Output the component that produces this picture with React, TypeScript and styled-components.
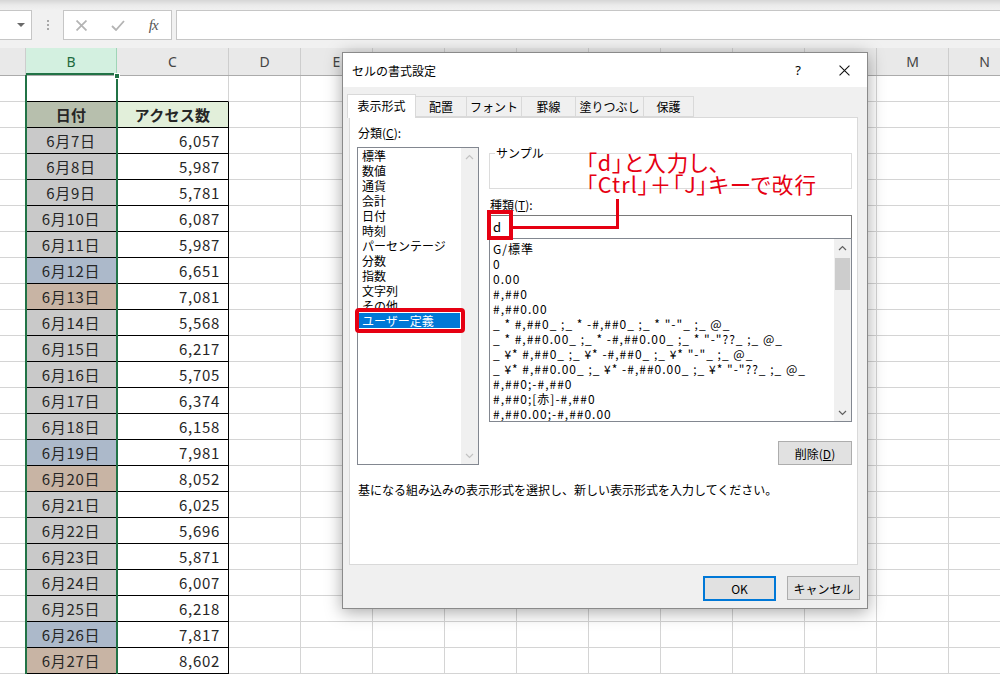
import React from 'react';
import styled, { createGlobalStyle } from 'styled-components';

const JP = `"Noto Sans CJK JP", "Noto Sans", sans-serif`;
const RED = '#e60012';
const GRID = '#d4d4d4';

const GlobalStyle = createGlobalStyle`
  html, body { margin: 0; padding: 0; background: #fff; }
  body { font-family: ${JP}; }
  * { box-sizing: border-box; }
`;

const Screen = styled.div`
  position: relative;
  width: 1000px;
  height: 674px;
  overflow: hidden;
  background: #fff;
`;

/* ---------- formula bar ---------- */
const FormulaBar = styled.div`
  height: 48px;
  display: flex;
  align-items: flex-start;
  padding-top: 10px;
  background: linear-gradient(#d6d6d6 0, #eaeaea 5px, #f1f1f1 10px);
`;
const NameBox = styled.div`
  width: 32px;
  height: 30px;
  background: #fff;
  border: 1px solid #c6c6c6;
  border-left: none;
  display: flex;
  align-items: center;
  justify-content: flex-end;
  padding-right: 6px;
`;
const DropArrow = styled.div`
  width: 0;
  height: 0;
  border-left: 4px solid transparent;
  border-right: 4px solid transparent;
  border-top: 4px solid #6a6a6a;
`;
const Grip = styled.div`
  width: 31px;
  height: 30px;
  display: flex;
  flex-direction: column;
  align-items: center;
  justify-content: center;
  gap: 2px;
`;
const GripDot = styled.div`
  width: 2px;
  height: 2px;
  background: #a8a8a8;
`;
const FxBox = styled.div`
  width: 109px;
  height: 30px;
  background: #fff;
  border: 1px solid #c6c6c6;
  display: flex;
  align-items: center;
`;
const FxSlot = styled.div`
  width: 36px;
  height: 28px;
  display: flex;
  align-items: center;
  justify-content: center;
`;
const FxText = styled.span`
  font-family: "Liberation Serif", serif;
  font-style: italic;
  font-size: 15px;
  color: #555;
  letter-spacing: -1px;
`;
const FormulaInput = styled.div`
  flex: 1;
  margin-left: 4px;
  height: 30px;
  background: #fff;
  border: 1px solid #c6c6c6;
  border-right: none;
`;

/* ---------- sheet ---------- */
const COLS = '26px 91px 112px repeat(11, 72px)';

const HeaderRow = styled.div`
  display: grid;
  grid-template-columns: ${COLS};
  height: 28px;
  background: #e9e9e9;
  border-bottom: 1px solid #ababab;
`;
const ColHead = styled.div<{ $sel?: boolean }>`
  display: flex;
  align-items: center;
  justify-content: center;
  border-right: 1px solid ${(p) => (p.$sel ? '#9fd5b7' : '#cdcdcd')};
  font-family: "Noto Sans", sans-serif;
  font-size: 14px;
  color: ${(p) => (p.$sel ? '#1e6b3f' : '#444')};
  background: ${(p) => (p.$sel ? '#d3f0e0' : 'transparent')};
  box-shadow: ${(p) => (p.$sel ? 'inset 0 -2px 0 #217346' : 'none')};
`;
const Sheet = styled.div`
  display: grid;
  grid-template-columns: ${COLS};
  grid-auto-rows: 26px;
`;
const Cell = styled.div<{
  $fill?: string;
  $right: string;
  $bottom: string;
  $align: string;
  $bold?: boolean;
}>`
  border-right: 1px solid ${(p) => p.$right};
  border-bottom: 1px solid ${(p) => p.$bottom};
  background: ${(p) => p.$fill || '#fff'};
  font-family: ${JP};
  font-size: 15px;
  line-height: 25px;
  letter-spacing: ${(p) => (p.$bold ? '0.3px' : '0.7px')};
  color: #262626;
  text-align: ${(p) => p.$align};
  padding-right: ${(p) => (p.$align === 'right' ? '8px' : '0')};
  font-weight: ${(p) => (p.$bold ? 700 : 400)};
  white-space: nowrap;
  overflow: hidden;
`;
const Selection = styled.div`
  position: absolute;
  left: 25px;
  top: 75px;
  width: 93px;
  height: 600px;
  border-left: 2px solid #217346;
  border-right: 2px solid #217346;
  pointer-events: none;
`;
const SelHandle = styled.div`
  position: absolute;
  right: -4px;
  top: -2px;
  width: 6px;
  height: 6px;
  background: #217346;
  border: 1px solid #fff;
`;

/* ---------- dialog ---------- */
const Dialog = styled.div`
  position: absolute;
  left: 342px;
  top: 52px;
  width: 526px;
  height: 557px;
  border: 1px solid #8a8a8a;
  background: #f0f0f0;
  box-shadow: 0 3px 16px rgba(0, 0, 0, 0.35);
  display: flex;
  flex-direction: column;
  font-family: ${JP};
  font-size: 12px;
  color: #000;
`;
const TitleBar = styled.div`
  height: 34px;
  flex: none;
  background: #fff;
  display: flex;
  align-items: center;
  padding-left: 9px;
`;
const TitleText = styled.div`
  flex: 1;
`;
const TitleButton = styled.div`
  width: 46px;
  height: 34px;
  display: flex;
  align-items: center;
  justify-content: center;
  font-family: "Noto Sans", sans-serif;
  font-size: 13px;
`;
const Body = styled.div`
  flex: 1;
  display: flex;
  flex-direction: column;
  padding: 7px 9px 7px 6px;
`;
const TabStrip = styled.div`
  display: flex;
  align-items: flex-end;
  height: 23px;
  margin-left: -2px;
  position: relative;
  z-index: 1;
`;
const Tab = styled.div<{ $w: number; $active?: boolean }>`
  width: ${(p) => p.$w}px;
  height: ${(p) => (p.$active ? 24 : 21)}px;
  margin-bottom: ${(p) => (p.$active ? -1 : 0)}px;
  margin-right: -1px;
  border: 1px solid #d9d9d9;
  border-bottom: ${(p) => (p.$active ? 'none' : '1px solid #d9d9d9')};
  background: ${(p) => (p.$active ? '#fff' : '#f0f0f0')};
  display: flex;
  align-items: center;
  justify-content: center;
  padding-bottom: ${(p) => (p.$active ? 2 : 0)}px;
  position: relative;
  z-index: ${(p) => (p.$active ? 2 : 1)};
`;
const Panel = styled.div`
  width: 509px;
  height: 448px;
  flex: none;
  background: #fff;
  border: 1px solid #d9d9d9;
  padding: 7px 0 0 7px;
  display: grid;
  grid-template-columns: 122px 363px;
  column-gap: 10px;
  align-content: start;
`;
const Column = styled.div`
  display: flex;
  flex-direction: column;
`;
const FieldLabel = styled.div<{ $mt?: number }>`
  height: 16px;
  line-height: 16px;
  padding-left: 1px;
  margin-top: ${(p) => p.$mt || 0}px;
`;
const ListBox = styled.div<{ $h: number; $mt: number }>`
  display: flex;
  height: ${(p) => p.$h}px;
  margin-top: ${(p) => p.$mt}px;
  border: 1px solid #828790;
  background: #fff;
  position: relative;
`;
const ListItems = styled.div<{ $pt: number; $ls?: number }>`
  flex: 1;
  padding-top: ${(p) => p.$pt}px;
  letter-spacing: ${(p) => p.$ls || 0}px;
  overflow: hidden;
`;
const ListItem = styled.div<{ $pl: number; $sel?: boolean }>`
  height: 15px;
  line-height: 15px;
  white-space: nowrap;
  padding-left: ${(p) => p.$pl}px;
  margin: 0 1px;
  background: ${(p) => (p.$sel ? '#0078d7' : 'transparent')};
  color: ${(p) => (p.$sel ? '#fff' : '#000')};
`;
const ScrollBar = styled.div`
  width: 17px;
  flex: none;
  background: #f0f0f0;
  display: flex;
  flex-direction: column;
  justify-content: space-between;
`;
const ScrollTop = styled.div`
  display: flex;
  flex-direction: column;
`;
const ScrollArrow = styled.div`
  height: 17px;
  display: flex;
  align-items: center;
  justify-content: center;
`;
const Thumb = styled.div`
  height: 32px;
  margin: 2px 1px 0 1px;
  background: #cdcdcd;
`;
const GroupBox = styled.div`
  position: relative;
  margin-top: 28px;
  height: 36px;
  border: 1px solid #dcdcdc;
`;
const GroupLegend = styled.div`
  position: absolute;
  left: 5px;
  top: -9px;
  padding: 0 1px;
  background: #fff;
  line-height: 16px;
`;
const TextInput = styled.div`
  margin-top: 2px;
  height: 24px;
  border: 1px solid #7a7a7a;
  background: #fff;
  padding-left: 3px;
  line-height: 21px;
  font-size: 13px;
`;
const PushButton = styled.div<{ $primary?: boolean; $w: number }>`
  width: ${(p) => p.$w}px;
  height: ${(p) => (p.$primary ? 25 : 24)}px;
  background: #e1e1e1;
  border: ${(p) => (p.$primary ? '2px solid #0078d7' : '1px solid #adadad')};
  display: flex;
  align-items: center;
  justify-content: center;
`;
const DeleteRow = styled.div`
  display: flex;
  justify-content: flex-end;
  margin-top: 19px;
`;
const Description = styled.div`
  grid-column: 1 / -1;
  margin-top: 17px;
  line-height: 16px;
  padding-left: 1px;
`;
const Footer = styled.div`
  display: flex;
  justify-content: flex-end;
  align-items: flex-start;
  gap: 11px;
  margin-top: 11px;
  margin-right: -2px;
`;

/* ---------- callouts ---------- */
const RedFrame = styled.div<{ $l: number; $t: number; $w: number; $h: number; $r?: number }>`
  position: absolute;
  left: ${(p) => p.$l}px;
  top: ${(p) => p.$t}px;
  width: ${(p) => p.$w}px;
  height: ${(p) => p.$h}px;
  border: 4px solid ${RED};
  border-radius: ${(p) => p.$r || 0}px;
  z-index: 5;
`;
const Leader = styled.div`
  position: absolute;
  left: 170px;
  top: 146px;
  width: 106px;
  height: 30px;
  border-right: 3px solid ${RED};
  border-bottom: 3px solid ${RED};
  z-index: 5;
`;
const CalloutText = styled.div`
  position: absolute;
  left: 243px;
  top: 98px;
  font-family: ${JP};
  font-size: 21.5px;
  line-height: 22px;
  letter-spacing: 1.1px;
  font-feature-settings: "palt";
  color: ${RED};
  white-space: nowrap;
  z-index: 5;
`;

/* ---------- icons ---------- */
const Chevron = ({ up, color }: { up?: boolean; color: string }) => (
  <svg width="9" height="6" viewBox="0 0 9 6">
    <polyline
      points={up ? '1,5 4.5,1.5 8,5' : '1,1 4.5,4.5 8,1'}
      fill="none"
      stroke={color}
      strokeWidth="1.2"
    />
  </svg>
);
const CrossIcon = ({ size, color, w }: { size: number; color: string; w: number }) => (
  <svg width={size} height={size} viewBox="0 0 10 10">
    <path d="M0.5 0.5 L9.5 9.5 M9.5 0.5 L0.5 9.5" stroke={color} strokeWidth={w} fill="none" />
  </svg>
);
const CheckIcon = () => (
  <svg width="14" height="11" viewBox="0 0 14 11">
    <polyline points="1,6 5,10 13,1" fill="none" stroke="#b4b4b4" strokeWidth="1.8" />
  </svg>
);

/* ---------- data ---------- */
const DATA: [string, string, 'w' | 'sat' | 'sun'][] = [
  ['6月7日', '6,057', 'w'],
  ['6月8日', '5,987', 'w'],
  ['6月9日', '5,781', 'w'],
  ['6月10日', '6,087', 'w'],
  ['6月11日', '5,987', 'w'],
  ['6月12日', '6,651', 'sat'],
  ['6月13日', '7,081', 'sun'],
  ['6月14日', '5,568', 'w'],
  ['6月15日', '6,217', 'w'],
  ['6月16日', '5,705', 'w'],
  ['6月17日', '6,374', 'w'],
  ['6月18日', '6,158', 'w'],
  ['6月19日', '7,981', 'sat'],
  ['6月20日', '8,052', 'sun'],
  ['6月21日', '6,025', 'w'],
  ['6月22日', '5,696', 'w'],
  ['6月23日', '5,871', 'w'],
  ['6月24日', '6,007', 'w'],
  ['6月25日', '6,218', 'w'],
  ['6月26日', '7,817', 'sat'],
  ['6月27日', '8,602', 'sun'],
];
const FILLS = { w: '#c9c9c9', sat: '#acb9ca', sun: '#c8b4a4' };
const HEADS = ['', 'B', 'C', 'D', 'E', 'F', 'G', 'H', 'I', 'J', 'K', 'L', 'M', 'N'];

type Spec = { text?: string; fill?: string; align: string; bold?: boolean; right: string; bottom: string };

const buildRows = (): Spec[][] => {
  const rows: Spec[][] = [];
  for (let r = 0; r < 23; r++) {
    const row: Spec[] = [];
    for (let c = 0; c < 14; c++) {
      const s: Spec = { align: 'center', right: GRID, bottom: GRID };
      const inTable = r >= 1 && (c === 1 || c === 2);
      if (inTable) {
        s.right = '#000';
        s.bottom = '#000';
      }
      if (r === 0 && (c === 1 || c === 2)) s.bottom = '#000';
      if (r >= 1 && c === 0) s.right = '#000';
      if (r === 1 && c === 1) Object.assign(s, { text: '日付', fill: '#b7bfad', bold: true });
      if (r === 1 && c === 2) Object.assign(s, { text: 'アクセス数', fill: '#e2efda', bold: true });
      if (r >= 2) {
        const d = DATA[r - 2];
        if (c === 1) Object.assign(s, { text: d[0], fill: FILLS[d[2]] });
        if (c === 2) Object.assign(s, { text: d[1], align: 'right' });
      }
      row.push(s);
    }
    rows.push(row);
  }
  return rows;
};
const ROWS = buildRows();

const TABS: [string, number][] = [
  ['表示形式', 69],
  ['配置', 52],
  ['フォント', 56],
  ['罫線', 55],
  ['塗りつぶし', 69],
  ['保護', 51],
];
const CATEGORIES = [
  '標準',
  '数値',
  '通貨',
  '会計',
  '日付',
  '時刻',
  'パーセンテージ',
  '分数',
  '指数',
  '文字列',
  'その他',
  'ユーザー定義',
];
const FORMATS = [
  'G/標準',
  '0',
  '0.00',
  '#,##0',
  '#,##0.00',
  '_ * #,##0_ ;_ * -#,##0_ ;_ * "-"_ ;_ @_',
  '_ * #,##0.00_ ;_ * -#,##0.00_ ;_ * "-"??_ ;_ @_',
  '_ ¥* #,##0_ ;_ ¥* -#,##0_ ;_ ¥* "-"_ ;_ @_',
  '_ ¥* #,##0.00_ ;_ ¥* -#,##0.00_ ;_ ¥* "-"??_ ;_ @_',
  '#,##0;-#,##0',
  '#,##0;[赤]-#,##0',
  '#,##0.00;-#,##0.00',
];

export default function App() {
  return (
    <Screen>
      <GlobalStyle />
      <FormulaBar>
        <NameBox>
          <DropArrow />
        </NameBox>
        <Grip>
          <GripDot />
          <GripDot />
          <GripDot />
        </Grip>
        <FxBox>
          <FxSlot>
            <CrossIcon size={11} color="#b4b4b4" w={1.6} />
          </FxSlot>
          <FxSlot>
            <CheckIcon />
          </FxSlot>
          <FxSlot>
            <FxText>fx</FxText>
          </FxSlot>
        </FxBox>
        <FormulaInput />
      </FormulaBar>

      <HeaderRow>
        {HEADS.map((h, i) => (
          <ColHead key={i} $sel={h === 'B'}>
            {h}
          </ColHead>
        ))}
      </HeaderRow>
      <Sheet>
        {ROWS.map((row, r) =>
          row.map((s, c) => (
            <Cell
              key={`${r}-${c}`}
              $fill={s.fill}
              $right={s.right}
              $bottom={s.bottom}
              $align={s.align}
              $bold={s.bold}
            >
              {s.text}
            </Cell>
          ))
        )}
      </Sheet>
      <Selection>
        <SelHandle />
      </Selection>

      <Dialog>
        <TitleBar>
          <TitleText>セルの書式設定</TitleText>
          <TitleButton>?</TitleButton>
          <TitleButton>
            <CrossIcon size={11} color="#111" w={1} />
          </TitleButton>
        </TitleBar>
        <Body>
          <TabStrip>
            {TABS.map(([t, w], i) => (
              <Tab key={t} $w={w} $active={i === 0}>
                {t}
              </Tab>
            ))}
          </TabStrip>
          <Panel>
            <Column>
              <FieldLabel>
                分類(<u>C</u>):
              </FieldLabel>
              <ListBox $h={318} $mt={6}>
                <ListItems $pt={0}>
                  {CATEGORIES.map((c) => (
                    <ListItem key={c} $pl={3} $sel={c === 'ユーザー定義'}>
                      {c}
                    </ListItem>
                  ))}
                </ListItems>
                <ScrollBar>
                  <ScrollArrow>
                    <Chevron up color="#c2c2c2" />
                  </ScrollArrow>
                  <ScrollArrow>
                    <Chevron color="#c2c2c2" />
                  </ScrollArrow>
                </ScrollBar>
              </ListBox>
            </Column>
            <Column>
              <GroupBox>
                <GroupLegend>サンプル</GroupLegend>
              </GroupBox>
              <FieldLabel $mt={8}>
                種類(<u>T</u>):
              </FieldLabel>
              <TextInput>d</TextInput>
              <ListBox $h={184} $mt={-1}>
                <ListItems $pt={2} $ls={1}>
                  {FORMATS.map((f) => (
                    <ListItem key={f} $pl={2}>
                      {f}
                    </ListItem>
                  ))}
                </ListItems>
                <ScrollBar>
                  <ScrollTop>
                    <ScrollArrow>
                      <Chevron up color="#606060" />
                    </ScrollArrow>
                    <Thumb />
                  </ScrollTop>
                  <ScrollArrow>
                    <Chevron color="#606060" />
                  </ScrollArrow>
                </ScrollBar>
              </ListBox>
              <DeleteRow>
                <PushButton $w={74}>
                  削除(<u>D</u>)
                </PushButton>
              </DeleteRow>
            </Column>
            <Description>基になる組み込みの表示形式を選択し、新しい表示形式を入力してください。</Description>
          </Panel>
          <Footer>
            <PushButton $primary $w={73}>
              OK
            </PushButton>
            <PushButton $w={73}>キャンセル</PushButton>
          </Footer>
        </Body>

        <RedFrame $l={12} $t={255} $w={110} $h={25} $r={4} />
        <RedFrame $l={144} $t={157} $w={26} $h={30} />
        <Leader />
        <CalloutText>
          「d」と入力し、
          <br />
          「Ctrl」＋「J」キーで改行
        </CalloutText>
      </Dialog>
    </Screen>
  );
}
